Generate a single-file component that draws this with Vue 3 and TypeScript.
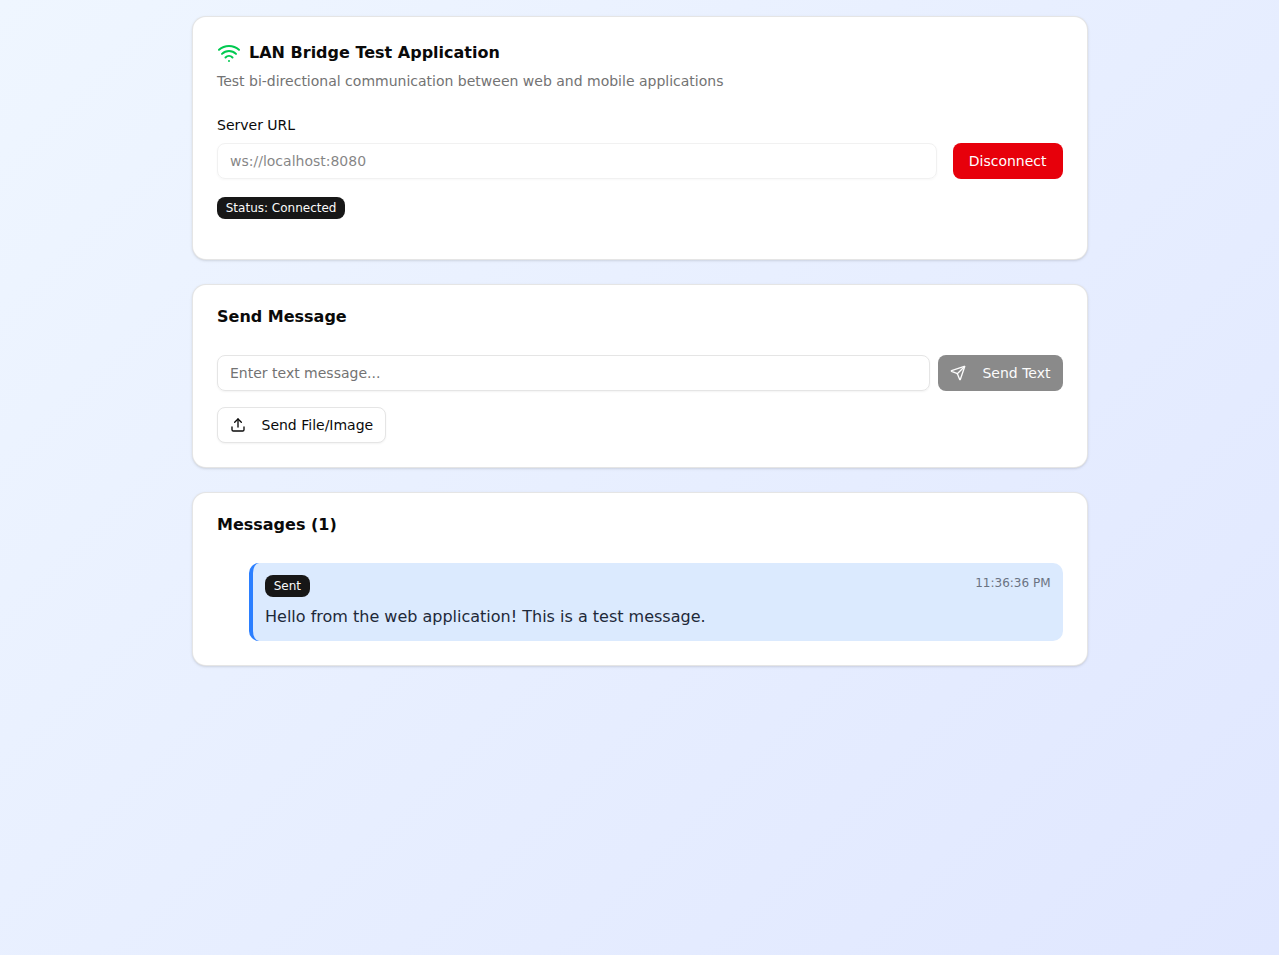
<script setup lang="ts">
const serverUrl = 'ws://localhost:8080'
</script>

<template>
  <main class="page">
    <div class="stack">
      <section class="card conn">
        <header class="head">
          <h1 class="title with-icon">
            <svg class="wifi" viewBox="0 0 24 24" width="24" height="24" fill="none" stroke="currentColor" stroke-width="2" stroke-linecap="round" stroke-linejoin="round">
              <path d="M12 20h.01" /><path d="M2 8.82a15 15 0 0 1 20 0" /><path d="M5 12.859a10 10 0 0 1 14 0" /><path d="M8.5 16.429a5 5 0 0 1 7 0" />
            </svg>
            LAN Bridge Test Application
          </h1>
          <p class="sub">Test bi-directional communication between web and mobile applications</p>
        </header>
        <label class="label" for="url">Server URL</label>
        <div class="row gap16">
          <input id="url" class="input" :value="serverUrl" disabled />
          <button class="btn danger">Disconnect</button>
        </div>
        <div class="status"><span class="badge">Status: Connected</span></div>
      </section>

      <section class="card">
        <header class="head"><h2 class="title">Send Message</h2></header>
        <div class="row gap8">
          <input class="input" placeholder="Enter text message..." />
          <button class="btn muted icon-btn">
            <svg viewBox="0 0 24 24" width="16" height="16" fill="none" stroke="currentColor" stroke-width="2" stroke-linecap="round" stroke-linejoin="round">
              <path d="M14.536 21.686a.5.5 0 0 0 .937-.024l6.5-19a.496.496 0 0 0-.635-.635l-19 6.5a.5.5 0 0 0-.024.937l7.93 3.18a2 2 0 0 1 1.112 1.11z" /><path d="m21.854 2.147-10.94 10.939" />
            </svg>
            Send Text
          </button>
        </div>
        <button class="btn outline icon-btn">
          <svg viewBox="0 0 24 24" width="16" height="16" fill="none" stroke="currentColor" stroke-width="2" stroke-linecap="round" stroke-linejoin="round">
            <path d="M12 3v12" /><path d="m17 8-5-5-5 5" /><path d="M21 15v4a2 2 0 0 1-2 2H5a2 2 0 0 1-2-2v-4" />
          </svg>
          Send File/Image
        </button>
      </section>

      <section class="card">
        <header class="head"><h2 class="title">Messages (1)</h2></header>
        <article class="msg">
          <div class="msg-top">
            <span class="badge">Sent</span>
            <time class="time">11:36:36 PM</time>
          </div>
          <p class="msg-text">Hello from the web application! This is a test message.</p>
        </article>
      </section>
    </div>
  </main>
</template>

<style>
html, body { margin: 0; }
</style>

<style scoped>
* { box-sizing: border-box; }
.page {
  min-height: 955px;
  padding: 16px;
  background: linear-gradient(135deg, #eff6ff, #e0e7ff);
  font-family: "DejaVu Sans", sans-serif;
  color: #0a0a0a;
}
.stack {
  width: 895.5px;
  margin-left: 176px;
  display: flex;
  flex-direction: column;
  gap: 24px;
}
.card {
  background: #fff;
  border: 1px solid rgba(0, 0, 0, 0.1);
  border-radius: 14px;
  padding: 24px;
  box-shadow: 0 1px 3px rgba(0, 0, 0, 0.1), 0 1px 2px -1px rgba(0, 0, 0, 0.1);
}
.head { margin-bottom: 30px; }
.conn .head { margin-bottom: 24px; }
.title {
  margin: 0;
  font-size: 16px;
  line-height: 16px;
  font-weight: 600;
}
.with-icon {
  display: flex;
  align-items: center;
  gap: 8px;
  height: 24px;
}
.wifi { color: #00c950; }
.sub {
  margin: 6px 0 0;
  font-size: 14px;
  line-height: 20px;
  color: #737373;
}
.label {
  display: block;
  font-size: 14px;
  line-height: 20px;
  margin-bottom: 8px;
}
.row { display: flex; }
.gap16 { gap: 16px; }
.gap8 { gap: 8px; margin-bottom: 16px; }
.input {
  flex: 1;
  min-width: 0;
  height: 36px;
  padding: 4px 12px;
  border: 1px solid #e5e5e5;
  border-radius: 8px;
  background: transparent;
  font: 14px "DejaVu Sans", sans-serif;
  color: #0a0a0a;
  outline: none;
  box-shadow: 0 1px 2px rgba(0, 0, 0, 0.05);
}
.input::placeholder { color: #737373; opacity: 1; }
.input:disabled { opacity: 0.5; }
.btn {
  height: 36px;
  display: inline-flex;
  align-items: center;
  justify-content: center;
  padding: 0 16px;
  border: 0;
  border-radius: 8px;
  font: 14px "DejaVu Sans", sans-serif;
  white-space: nowrap;
}
.icon-btn { padding: 0 12px; gap: 16px; }
.danger { background: #e7000b; color: #fff; }
.muted { background: #171717; color: #fafafa; opacity: 0.5; }
.outline {
  background: #fff;
  color: #0a0a0a;
  border: 1px solid #e5e5e5;
  box-shadow: 0 1px 2px rgba(0, 0, 0, 0.05);
  gap: 15.5px;
}
.status { margin: 18px 0 16px; display: flex; }
.badge {
  display: inline-flex;
  align-items: center;
  height: 22px;
  padding: 0 7.75px;
  border: 1px solid transparent;
  border-radius: 8px;
  background: #171717;
  color: #fafafa;
  font-size: 12px;
  line-height: 16px;
}
.msg {
  margin-left: 32px;
  padding: 12px;
  background: #dbeafe;
  border-left: 4px solid #2b7fff;
  border-radius: 10px;
}
.msg-top { display: flex; justify-content: space-between; align-items: flex-start; }
.time { font-size: 12px; line-height: 16px; color: #6a7282; }
.msg-text {
  margin: 8px 0 0;
  font-size: 16px;
  line-height: 24px;
  color: #1e2939;
}
</style>
